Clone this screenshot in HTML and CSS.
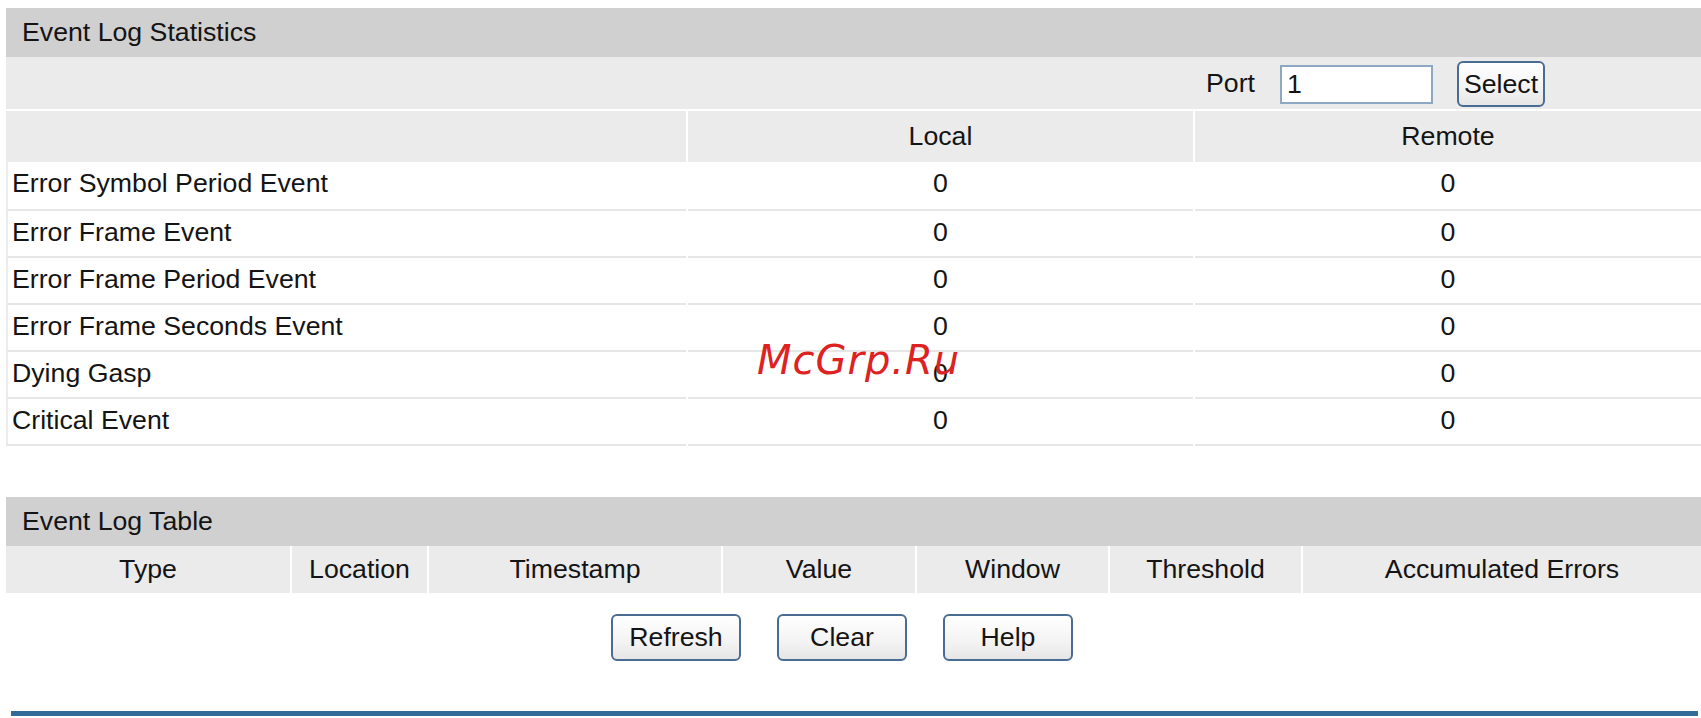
FILE: index.html
```html
<!DOCTYPE html>
<html lang="en">
<head>
<meta charset="utf-8">
<title>Event Log</title>
<link rel="stylesheet" href="styles.css">
</head>
<body>
<div class="page">
  <section class="panel stats">
    <div class="panel-title">Event Log Statistics</div>
    <div class="port-bar">
      <label class="port-label" for="port">Port</label>
      <input class="port-input" id="port" type="text" value="1">
      <button class="btn btn-select" type="button">Select</button>
    </div>
    <div class="grid grid-stats">
      <div class="hcell"></div>
      <div class="hcell">Local</div>
      <div class="hcell">Remote</div>

      <div class="dcell label first">Error Symbol Period Event</div>
      <div class="dcell first">0</div>
      <div class="dcell first">0</div>

      <div class="dcell label">Error Frame Event</div>
      <div class="dcell">0</div>
      <div class="dcell">0</div>

      <div class="dcell label">Error Frame Period Event</div>
      <div class="dcell">0</div>
      <div class="dcell">0</div>

      <div class="dcell label">Error Frame Seconds Event</div>
      <div class="dcell">0</div>
      <div class="dcell">0</div>

      <div class="dcell label">Dying Gasp</div>
      <div class="dcell">0</div>
      <div class="dcell">0</div>

      <div class="dcell label">Critical Event</div>
      <div class="dcell">0</div>
      <div class="dcell">0</div>
    </div>
  </section>

  <section class="panel log">
    <div class="panel-title">Event Log Table</div>
    <div class="grid grid-log">
      <div class="hcell hcell-log">Type</div>
      <div class="hcell hcell-log">Location</div>
      <div class="hcell hcell-log">Timestamp</div>
      <div class="hcell hcell-log">Value</div>
      <div class="hcell hcell-log">Window</div>
      <div class="hcell hcell-log">Threshold</div>
      <div class="hcell hcell-log">Accumulated Errors</div>
    </div>
  </section>

  <div class="actions">
    <button class="btn btn-action" type="button">Refresh</button>
    <button class="btn btn-action" type="button">Clear</button>
    <button class="btn btn-action" type="button">Help</button>
  </div>

  <div class="rule"></div>

  <div class="watermark">McGrp.Ru</div>
</div>
</body>
</html>
```
FILE: styles.css
```css
html, body {
  margin: 0;
  padding: 0;
  overflow: hidden;
  background: #ffffff;
}

body {
  font-family: "Liberation Sans", Arial, sans-serif;
  font-size: 26.7px;
  color: #141414;
}

.page {
  position: relative;
  width: 1701px;
  height: 718px;
  padding-top: 8px;
  box-sizing: border-box;
}

.panel {
  margin-left: 6px;
  width: 1695px;
}

.panel-title {
  height: 49px;
  background: #d0d0d0;
  padding-left: 16px;
  display: flex;
  align-items: center;
  box-sizing: border-box;
}

.port-bar {
  height: 52px;
  background: #ebebeb;
  display: flex;
  justify-content: flex-end;
  align-items: center;
  padding-right: 156px;
  box-sizing: border-box;
}

.port-label {
  margin-right: 25px;
}

.port-input {
  width: 153px;
  height: 39px;
  box-sizing: border-box;
  border: 2px solid #8ea7c3;
  background: #ffffff;
  font: inherit;
  color: #141414;
  padding: 0 5px;
  margin: 2px 24px 0 0;
  outline: none;
}

.grid {
  display: grid;
  column-gap: 2px;
}

.grid-stats {
  grid-template-columns: 680px 505px 506px;
  margin-top: 2px;
}

.grid-log {
  grid-template-columns: 284px 135px 292px 192px 191px 191px 398px;
}

.hcell {
  height: 51px;
  background: #ebebeb;
  display: flex;
  align-items: center;
  justify-content: center;
}

.hcell-log {
  height: 47px;
}

.dcell {
  height: 47px;
  box-sizing: border-box;
  border-bottom: 2px solid #e6e6e6;
  padding-bottom: 3px;
  display: flex;
  align-items: center;
  justify-content: center;
}

.dcell.first {
  height: 49px;
  padding-bottom: 5px;
}

.dcell.label {
  justify-content: flex-start;
  border-left: 2px solid #ececec;
  padding-left: 4px;
}

.log {
  margin-top: 51px;
}

.btn {
  font: inherit;
  color: #141414;
  background: linear-gradient(#ffffff, #f3f3f3 60%, #e6e6e6);
  border: 2px solid #4a6c92;
  border-radius: 6px;
  box-sizing: border-box;
  padding: 0;
  cursor: pointer;
}

.btn-select {
  width: 88px;
  height: 46px;
  margin-top: 2px;
}

.actions {
  margin-left: 6px;
  width: 1695px;
  margin-top: 21px;
  padding-right: 23px;
  box-sizing: border-box;
  display: flex;
  justify-content: center;
  gap: 36px;
}

.btn-action {
  width: 130px;
  height: 47px;
}

.rule {
  margin-top: 50px;
  margin-left: 11px;
  width: 1687px;
  height: 5px;
  background: #336b98;
}

.watermark {
  position: absolute;
  left: 757px;
  top: 340px;
  font-family: "DejaVu Sans", sans-serif;
  font-style: italic;
  font-size: 40px;
  line-height: 1;
  color: #dd2222;
  letter-spacing: 1px;
}
```
